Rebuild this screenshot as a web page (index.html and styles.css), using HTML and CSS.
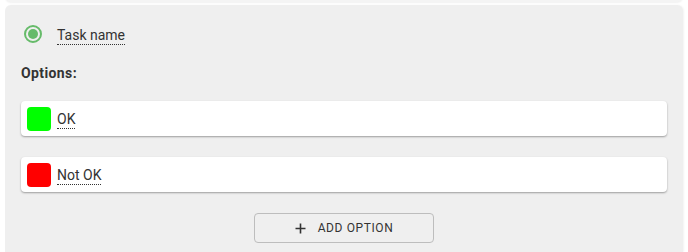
FILE: index.html
```html
<!DOCTYPE html>
<html>
<head>
<meta charset="utf-8">
<link rel="stylesheet" href="styles.css">
</head>
<body>
<div class="prev-card"></div>
<div class="panel">
  <div class="task-row">
    <svg class="radio" width="20" height="20" viewBox="0 0 20 20">
      <circle cx="10" cy="10" r="8" fill="none" stroke="#66bb6a" stroke-width="2"/>
      <circle cx="10" cy="10" r="5" fill="#66bb6a"/>
    </svg>
    <span class="task-name">Task name</span>
  </div>
  <div class="options-label">Options:</div>
  <div class="option">
    <span class="swatch green"></span>
    <span class="option-text">OK</span>
  </div>
  <div class="option">
    <span class="swatch red"></span>
    <span class="option-text">Not OK</span>
  </div>
  <div class="actions">
    <button class="add-btn">
      <svg class="plus" width="11" height="11" viewBox="0 0 11 11">
        <path d="M5.5 0.5V10.5M0.5 5.5H10.5" stroke="#333" stroke-width="1.6" fill="none"/>
      </svg>ADD OPTION</button>
  </div>
</div>
</body>
</html>
```

FILE: styles.css
```css
html, body {
  margin: 0;
  padding: 0;
  background: #ffffff;
  font-family: Roboto, "Liberation Sans", sans-serif;
  color: #333;
  overflow: hidden;
  height: 100%;
}
.prev-card {
  margin: -10px 5px 0 5px;
  height: 12px;
  background: #f4f4f4;
  border-radius: 0 0 6px 6px;
  box-shadow: 0 1px 2px rgba(0,0,0,0.06);
}
.panel {
  margin: 3px 5px 0 5px;
  background: #efefef;
  border-radius: 6px 6px 0 0;
  box-shadow: 1px 0 2px rgba(0,0,0,0.05);
  padding: 19px 16px 0 16px;
  height: calc(100vh - 5px);
  box-sizing: border-box;
  overflow: hidden;
}
.task-row {
  display: flex;
  align-items: center;
  gap: 14px;
  height: 20px;
  padding-left: 2px;
}
.radio { display: block; }
.task-name {
  font-size: 14px;
  line-height: 18px;
  border-bottom: 1px dotted #333;
  padding-top: 2px;
}
.options-label {
  margin-top: 20px;
  font-size: 14px;
  font-weight: 700;
  letter-spacing: 0.4px;
  line-height: 18px;
}
.option {
  margin-top: 19px;
  height: 35px;
  background: #fff;
  border-radius: 4px;
  box-shadow: 0 1px 2px rgba(0,0,0,0.35);
  display: flex;
  align-items: center;
  padding-left: 6px;
  gap: 6px;
}
.option + .option { margin-top: 21px; }
.swatch {
  width: 24px;
  height: 24px;
  border-radius: 4px;
}
.swatch.green { background: #00ff00; }
.swatch.red { background: #ff0000; }
.option-text {
  font-size: 14px;
  line-height: 17px;
  border-bottom: 1px dotted #333;
  padding-top: 2px;
}
.actions {
  display: flex;
  justify-content: center;
  margin-top: 21px;
}
.add-btn {
  width: 180px;
  height: 30px;
  background: transparent;
  border: 1px solid #bdbdbd;
  border-radius: 4px;
  font-family: Roboto, "Liberation Sans", sans-serif;
  font-size: 12px;
  letter-spacing: 0.6px;
  color: #333;
  display: flex;
  align-items: center;
  justify-content: center;
  padding: 0;
  margin-left: 0;
}
.plus {
  display: block;
  margin-right: 12px;
}
```
